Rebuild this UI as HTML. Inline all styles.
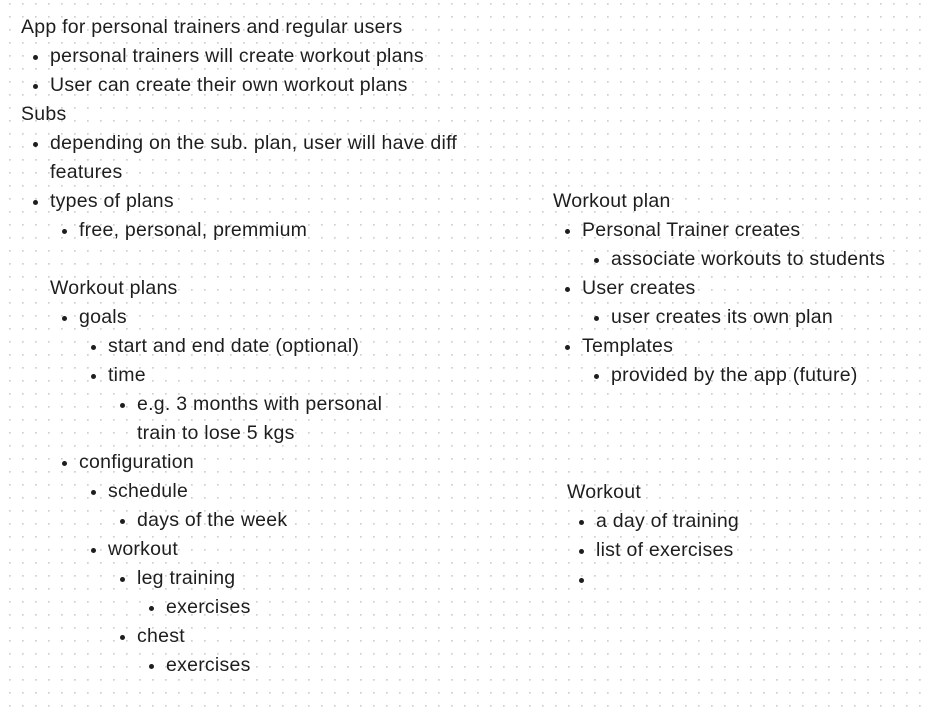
<!DOCTYPE html>
<html><head><meta charset="utf-8"><style>
html,body{margin:0;padding:0}
body{width:928px;height:708px;background-color:#fff;background-image:radial-gradient(circle at 0.8px 0.8px,#d0d0d0 0.8px,transparent 1.2px);background-size:13px 13px;background-position:9px 3px;font-family:"Liberation Sans",sans-serif;font-size:19.5px;letter-spacing:0.25px;color:#1e1e1e;position:relative;overflow:hidden}
.l{position:absolute;white-space:nowrap;line-height:29px;margin-top:1px}
.b::before{content:"";position:absolute;left:-17px;top:13px;width:5px;height:5px;border-radius:50%;background:#1e1e1e}
</style></head><body>
<div class="l" style="left:21px;top:12px">App for personal trainers and regular users</div>
<div class="l b" style="left:50px;top:41px">personal trainers will create workout plans</div>
<div class="l b" style="left:50px;top:70px">User can create their own workout plans</div>
<div class="l" style="left:21px;top:99px">Subs</div>
<div class="l b" style="left:50px;top:128px">depending on the sub. plan, user will have diff</div>
<div class="l" style="left:50px;top:157px">features</div>
<div class="l b" style="left:50px;top:186px">types of plans</div>
<div class="l b" style="left:79px;top:215px">free, personal, premmium</div>
<div class="l" style="left:50px;top:273px">Workout plans</div>
<div class="l b" style="left:79px;top:302px">goals</div>
<div class="l b" style="left:108px;top:331px">start and end date (optional)</div>
<div class="l b" style="left:108px;top:360px">time</div>
<div class="l b" style="left:137px;top:389px">e.g. 3 months with personal</div>
<div class="l" style="left:137px;top:418px">train to lose 5 kgs</div>
<div class="l b" style="left:79px;top:447px">configuration</div>
<div class="l b" style="left:108px;top:476px">schedule</div>
<div class="l b" style="left:137px;top:505px">days of the week</div>
<div class="l b" style="left:108px;top:534px">workout</div>
<div class="l b" style="left:137px;top:563px">leg training</div>
<div class="l b" style="left:166px;top:592px">exercises</div>
<div class="l b" style="left:137px;top:621px">chest</div>
<div class="l b" style="left:166px;top:650px">exercises</div>

<div class="l" style="left:553px;top:186px">Workout plan</div>
<div class="l b" style="left:582px;top:215px">Personal Trainer creates</div>
<div class="l b" style="left:611px;top:244px">associate workouts to students</div>
<div class="l b" style="left:582px;top:273px">User creates</div>
<div class="l b" style="left:611px;top:302px">user creates its own plan</div>
<div class="l b" style="left:582px;top:331px">Templates</div>
<div class="l b" style="left:611px;top:360px">provided by the app (future)</div>

<div class="l" style="left:567px;top:477px">Workout</div>
<div class="l b" style="left:596px;top:506px">a day of training</div>
<div class="l b" style="left:596px;top:535px">list of exercises</div>
<div class="l b" style="left:596px;top:564px">&nbsp;</div>
</body></html>
